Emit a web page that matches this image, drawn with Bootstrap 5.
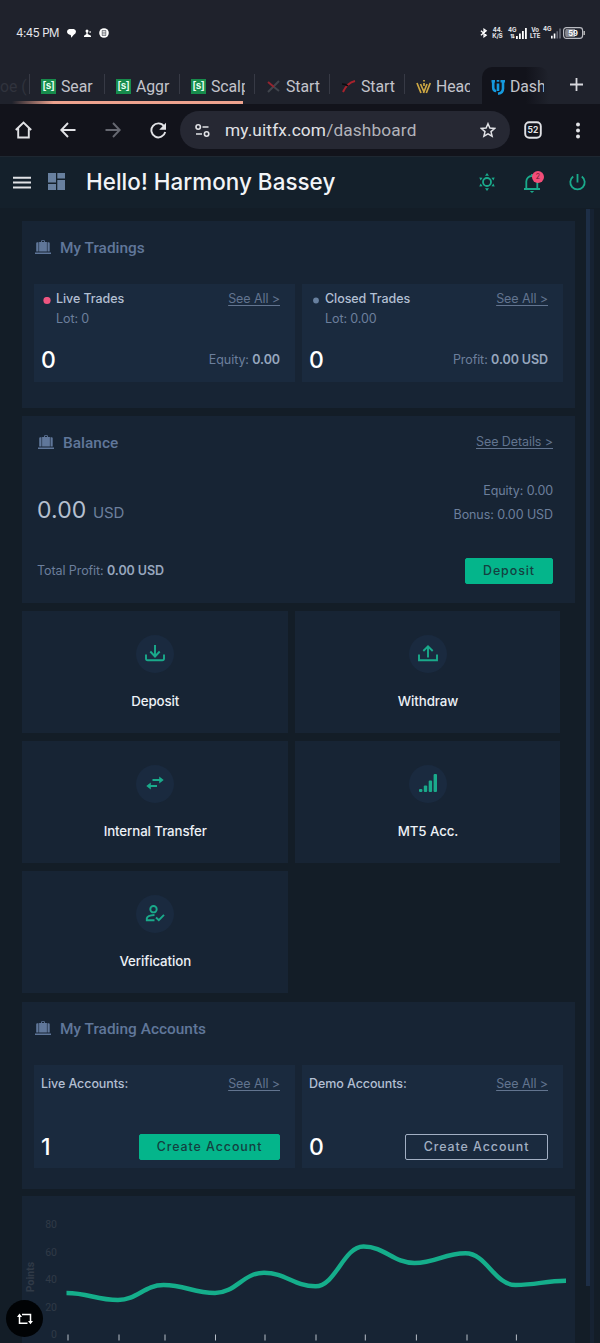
<!DOCTYPE html>
<html lang="en">
<head>
<meta charset="utf-8">
<meta name="viewport" content="width=device-width, initial-scale=1">
<title>Dashboard</title>
<link href="https://cdn.jsdelivr.net/npm/bootstrap@5.3.0/dist/css/bootstrap.min.css" rel="stylesheet">
<style>
body{margin:0;height:1343px;overflow:hidden;background:#131d27;color:#6c7f9c;font-family:Inter,"Liberation Sans",sans-serif;font-size:12.5px;line-height:16px;letter-spacing:-.08px;white-space:nowrap}
svg{display:block;flex:none}
.status-bar{height:70px;background:#1f222c;color:#e8e8ec;padding:0 15px 4px 16px;font-size:11.5px;letter-spacing:-.45px}
.tiny{font-size:6px;line-height:6px;font-weight:700;letter-spacing:-.1px;text-align:center}
.tab-strip{height:34px;background:#1f222c;color:#c3c4cb;font-family:Roboto,sans-serif;font-size:15.8px;letter-spacing:-.05px}
.tab-item{width:75px;height:34px;padding:0 7px 1px 12px;gap:5px}
.tab-item::before{content:"";position:absolute;left:0;top:4px;height:20px;width:1px;background:#373a45}
.tab-item .lbl{width:34px;overflow:hidden;line-height:24px}
.tab-on{background:linear-gradient(90deg,#12131b 65%,#1f222c);border-radius:10px 10px 0 0;height:37px;margin-top:-3px;margin-left:3px;padding-top:3px;width:67px;padding-left:9px;padding-right:0}
.tab-on::before{display:none}
.fav{width:15px;height:15px;background:#178c4c;color:#e9fff2;font:700 10px/14px "Liberation Sans",sans-serif;text-align:center;letter-spacing:-.3px}
.load-line{left:12px;top:101px;width:231px;height:3px;background:linear-gradient(90deg,#1f222c,#eda38f 18%)}
.tool-bar{height:53px;background:#12131b;color:#e1e2e6;border-bottom:1px solid #1e2731}
.url-pill{width:330px;height:38px;border-radius:19px;background:#262833;font:17.3px/38px Roboto,sans-serif;letter-spacing:.13px}
.app-head{height:51px;background:#14202b}
.app-head h1{font-size:22.4px;font-weight:500;line-height:30px;letter-spacing:.05px;color:#f2f4f7;margin-top:-2px}
.green{color:#1aaa8b}
.dot-badge{left:9px;top:-2px;width:12px;height:12px;border-radius:50%;background:#f34d78;color:#6b1930;font-size:7px;line-height:12px;text-align:center;letter-spacing:0}
.page-body{padding:13px 25px 0 22px}
.panel{background:#172434;width:553px;height:187px;margin-bottom:8px}
.panel h2{font-family:Roboto,sans-serif;font-size:15.4px;line-height:20px;font-weight:500;letter-spacing:.02px;color:#60779a;margin:2px 0 0}
.sub{background:#1a2a3e;width:261px;padding:0 15px 0 7px}
.sub a,.panel a{color:#62748f;text-decoration:underline;text-underline-offset:2px}
.ttl{color:#b2bfd2;font-weight:500}
.num{font-size:23px;line-height:28px;font-weight:500;color:#fff;letter-spacing:0}
.strong-v{color:#97a7be;font-weight:600}
.btn-go{--bs-btn-padding-y:0;--bs-btn-padding-x:0;--bs-btn-border-radius:2px;--bs-btn-bg:#04b58b;--bs-btn-color:#143f40;--bs-btn-border-color:#04b58b;font-size:12.4px;line-height:24px;height:26px;font-weight:500;letter-spacing:.95px;text-align:center}
.btn-line{--bs-btn-bg:transparent;--bs-btn-color:#a2afc3;--bs-btn-border-color:#a2afc3}
.tiles{width:538px;display:grid;grid-template-columns:265.5px 265px;gap:7.5px;margin-bottom:8.5px}
.tile{background:#172434;height:122.4px;color:#edf1f6;font-size:13.3px;font-weight:500;letter-spacing:-.1px;padding:24px 0 0 1px}
.disc{width:38px;height:38px;border-radius:50%;background:#1a2a3f;color:#1aaa8b;margin-bottom:20px;padding-bottom:1px}
.scroll-thumb{left:586px;top:209px;width:4px;height:1077px;background:#1d2e46}
.scroll-track{left:590px;top:209px;width:4px;height:1134px;background:#162232}
.float-btn{left:6px;top:1300px;width:37px;height:37px;border-radius:50%;background:#010305;color:#fff}
</style>
</head>
<body>
<svg width="0" height="0" class="position-absolute">
<symbol id="bag" viewBox="0 0 16 14"><path fill="currentColor" d="M4.1 2H6V1.2Q6 .2 7 .2h2q1 0 1 1V2h1.9v9.6H4.1zM6.9 2h2.2V1.1H6.9zM1.2 3.2q0-1 1-1h1.3v9.4H1.2zM12.5 2.2h1.2q1 0 1 1v8.4h-2.2zM0 12.5h16V14H0z"/></symbol>
</svg>
<div class="status-bar d-flex align-items-center">
 <span>4:45 PM</span>
 <svg style="margin-left:8px" width="9" height="9" viewBox="0 0 9 9" fill="#fff"><path d="M2.2 0h4.6Q9 .5 9 2.8 8.8 5 6.8 5.8L4.3 8.7 3.7 6Q0 5.2 0 2.8 0 .6 2.2 0z"/></svg>
 <svg class="ms-2" width="7" height="8" viewBox="0 0 7 8" fill="#fff"><circle cx="3" cy="2" r="1.5"/><path d="M2.4 3h1.3v2L7 6.7V8H0V6.7L2.4 5zM4.7 3l2-1v2z"/></svg>
 <svg class="ms-2" width="10" height="10" viewBox="0 0 10 10"><circle cx="5" cy="5" r="4.8" fill="#fff"/><path d="M3 2.5h4M3 4.2h4M3 5.9h4M3 7.5h4M3.2 2.5v5M6.8 2.5v5" stroke="#6b6e76" stroke-width=".8"/></svg>
 <svg class="ms-auto" width="8" height="10" viewBox="0 0 9 10" fill="none" stroke="#fff" stroke-width="1.4"><path d="m1 2.5 6 5L4.5 9.3V.7L7 2.5l-6 5"/></svg>
 <span class="tiny" style="width:11px;margin-left:4px">44.<br>K/S</span>
 <span class="tiny" style="width:8px;margin-left:5px">4G<br>⇅</span>
 <svg width="11" height="11" viewBox="0 0 11 11" fill="#fff"><path d="M0 8h1.8v3H0zM3 5.5h1.8V11H3zM6 3h1.8v8H6zM9 0h1.8v11H9z"/></svg>
 <span class="tiny" style="width:10px;margin-left:3px">Vo<br>LTE</span>
 <span class="tiny pb-2" style="width:8px;margin-left:3px">4G</span>
 <svg width="10" height="11" viewBox="0 0 11 11" fill="#fff"><path d="M0 8h1.8v3H0zM3 5.5h1.8V11H3z"/><path fill="#666974" d="M6 3h1.8v8H6zM9 0h1.8v11H9z"/></svg>
 <svg style="margin-left:2px" width="22" height="12" viewBox="0 0 22 12"><rect x=".6" y=".6" width="19" height="10.8" rx="2.8" fill="#1f222c" stroke="#b9bbc1" stroke-width="1.2"/><path d="M3 2h9v8H3q-1-1-1-4t1-4z" fill="#85878e"/><path d="M21.2 4v4" stroke="#ccc" stroke-width="1.3"/><text x="10" y="8.6" font-size="7.5" font-weight="700" fill="#fff" text-anchor="middle" letter-spacing="0">59</text></svg>
</div>
<div class="tab-strip d-flex position-relative">
 <div class="d-flex align-items-center" style="width:29px;color:#30333d">oe&nbsp;(</div>
 <div class="tab-item d-flex align-items-center position-relative"><span class="fav">[s]</span><span class="lbl">Sear</span></div>
 <div class="tab-item d-flex align-items-center position-relative"><span class="fav">[s]</span><span class="lbl">Aggr</span></div>
 <div class="tab-item d-flex align-items-center position-relative"><span class="fav">[s]</span><span class="lbl">Scalp</span></div>
 <div class="tab-item d-flex align-items-center position-relative"><svg width="15" height="15" viewBox="0 0 15 15" fill="none"><path d="M2 13 13 2M8 8l5 4" stroke="#41454d" stroke-width="2"/><path d="m2 3 6 5" stroke="#94242f" stroke-width="2"/></svg><span class="lbl">Start</span></div>
 <div class="tab-item d-flex align-items-center position-relative"><svg width="15" height="15" viewBox="0 0 15 15" fill="none"><path d="M2 13Q6 4 14 2" stroke="#a8222c" stroke-width="2"/><path d="M1 5q4 0 6 2" stroke="#0b0c10" stroke-width="1.5"/></svg><span class="lbl">Start</span></div>
 <div class="tab-item d-flex align-items-center position-relative"><svg width="15" height="15" viewBox="0 0 15 15" fill="none" stroke="#cda743" stroke-width="1.7"><path d="m1 4 4 10M4.5 5 8 13M8 1v1.6M8 4v3M11 5 7.5 14M14.3 4l-4 10"/></svg><span class="lbl">Head</span></div>
 <div class="tab-item tab-on d-flex align-items-center position-relative"><svg width="14" height="16" viewBox="0 0 14 16" fill="none" stroke="#1599dd" stroke-width="2.6"><path d="M2.2 1v7.5q0 3.5 3 3.5M.5 2.2h3.5M12 1v8.5q0 4.5-5 5.2M7 4.5v7.5M7 1v1.8M9.5 2.2H14"/></svg><span class="lbl">Dash</span></div>
 <svg class="ms-auto mt-2" style="margin-right:17px" width="13" height="13" viewBox="0 0 13 13" stroke="#d7d8dd" stroke-width="1.8"><path d="M6.5 0v13M0 6.5h13"/></svg>
</div>
<div class="load-line position-absolute"></div>
<div class="tool-bar d-flex align-items-center">
 <svg style="margin-left:15px" width="17" height="18" viewBox="0 0 17 18" fill="none" stroke="currentColor" stroke-width="1.9"><path d="M.8 9 8.5 1.5 16.2 9M3.2 7.2v9.3h10.6V7.2"/></svg>
 <svg style="margin-left:28px" width="16" height="16" viewBox="0 0 16 16" fill="none" stroke="currentColor" stroke-width="1.9"><path d="M15.5 8H1.5M8 1 1.3 8 8 15"/></svg>
 <svg style="margin-left:29px;color:#666871" width="16" height="16" viewBox="0 0 16 16" fill="none" stroke="currentColor" stroke-width="1.9"><path d="M.5 8h14M8 1l6.7 7L8 15"/></svg>
 <svg style="margin-left:29px" width="17" height="17" viewBox="0 0 17 17"><path d="M14 4.2A7 7 0 1 0 15.2 10" fill="none" stroke="currentColor" stroke-width="1.9"/><path d="M16 .8v7H9.2z" fill="currentColor"/></svg>
 <div class="url-pill d-flex align-items-center" style="margin-left:13px">
  <svg style="margin-left:15px" width="15" height="13" viewBox="0 0 15 13" fill="none" stroke="currentColor" stroke-width="1.6"><circle cx="3.2" cy="3" r="2.2"/><path d="M7.5 3h6M1 10h6"/><circle cx="11.6" cy="10" r="2.2"/></svg>
  <span style="margin-left:15px">my.uitfx.com<span style="color:#b2b3ba">/dashboard</span></span>
  <svg class="ms-auto" style="margin-right:14px" width="16" height="16" viewBox="0 0 16 16" fill="none" stroke="currentColor" stroke-width="1.5"><path d="m8 1.7 1.9 4.4 4.7.4-3.6 3.1 1.1 4.6L8 11.8l-4.1 2.4L5 9.6 1.4 6.5l4.7-.4z"/></svg>
 </div>
 <svg style="margin-left:14px" width="18" height="18" viewBox="0 0 18 18"><rect x="1.2" y="1.2" width="15.6" height="15.6" rx="4" fill="none" stroke="currentColor" stroke-width="1.9"/><text x="9" y="12.2" font-size="8.5" font-weight="700" letter-spacing="0" text-anchor="middle" fill="currentColor">52</text></svg>
 <svg style="margin-left:33px" width="6" height="17" viewBox="0 0 6 17" fill="currentColor"><circle cx="3" cy="2.5" r="2"/><circle cx="3" cy="8.5" r="2"/><circle cx="3" cy="14.5" r="2"/></svg>
</div>
<header class="app-head d-flex align-items-center">
 <svg style="margin-left:13px" width="18" height="13" viewBox="0 0 18 13" stroke="#e1e2e6" stroke-width="2"><path d="M0 1.8h18M0 6.6h18M0 11.4h18"/></svg>
 <svg style="margin:0 0 2px 17px" width="17" height="17" viewBox="0 0 17 17" fill="#68809f"><path d="M0 0h8v9.5H0zM9.3 0H17v5.5H9.3zM0 11h8v6H0zM9.3 7H17v10H9.3z"/></svg>
 <h1 class="mb-0" style="margin-left:21px">Hello! Harmony Bassey</h1>
 <svg class="ms-auto green" style="margin-bottom:1px" width="18" height="18" viewBox="0 0 18 18"><circle cx="9" cy="9" r="4" fill="none" stroke="currentColor" stroke-width="1.8"/><path fill="currentColor" d="m9 0 2 2.7H7zM9 18l2-2.7H7zM1.3 4.4l3.3.4-2 2.8zM16.7 4.4l-3.3.4 2 2.8zM1.3 13.6l3.3-.4-2-2.8zM16.7 13.6l-3.3-.4 2-2.8z"/></svg>
 <div class="position-relative green" style="margin-left:27px"><svg width="18" height="20" viewBox="0 0 18 20" fill="none" stroke="currentColor" stroke-width="1.8"><path d="M1 16h16M3.3 16V8.5a5.5 5.5 0 0 1 11 0V16M9 3V1"/><path d="M6.8 18h4.4L9 20z" fill="currentColor" stroke="none"/></svg><span class="dot-badge position-absolute">2</span></div>
 <svg class="green" style="margin:0 14px 0 28px" width="17" height="17" viewBox="0 0 17 17" fill="none" stroke="currentColor" stroke-width="1.8"><path d="M8.5 0v8.5M4.2 2.5a7.2 7.2 0 1 0 8.6 0"/></svg>
</header>
<main class="page-body">
 <section class="panel">
  <div class="d-flex align-items-center" style="height:63px;padding:0 0 11px 13px"><svg width="16" height="14" style="color:#60779a"><use href="#bag"/></svg><h2 style="margin-left:9px">My Tradings</h2></div>
  <div class="d-flex" style="gap:7px;margin-left:12px">
   <div class="sub" style="height:98px">
    <div class="d-flex align-items-center" style="padding:7px 0 0 2px"><svg width="8" height="8" class="mt-1"><circle cx="4" cy="3.5" r="3.6" fill="#ee5580"/></svg><span class="ttl" style="margin-left:5px">Live Trades</span><a class="ms-auto">See All &gt;</a></div>
    <div style="padding:4px 0 0 15px">Lot: 0</div>
    <div class="d-flex align-items-center" style="margin-top:19px"><span class="num">0</span><span class="ms-auto">Equity: <span class="strong-v">0.00</span></span></div>
   </div>
   <div class="sub" style="height:98px">
    <div class="d-flex align-items-center" style="padding:7px 0 0 2px"><svg width="8" height="8" class="mt-1"><circle cx="5" cy="3.5" r="2.9" fill="#68809f"/></svg><span class="ttl" style="margin-left:6px">Closed Trades</span><a class="ms-auto">See All &gt;</a></div>
    <div style="padding:4px 0 0 16px">Lot: 0.00</div>
    <div class="d-flex align-items-center" style="margin-top:19px"><span class="num">0</span><span class="ms-auto">Profit: <span class="strong-v">0.00 USD</span></span></div>
   </div>
  </div>
 </section>
 <section class="panel" style="padding:15px 22px 0 15px">
  <div class="d-flex align-items-center"><svg width="16" height="14" style="color:#60779a;margin-left:1px"><use href="#bag"/></svg><h2 style="margin-left:9px">Balance</h2><a class="ms-auto">See Details &gt;</a></div>
  <div class="d-flex" style="margin-top:31px"><div style="font-size:23px;line-height:28px;padding-top:12px;color:#b5c0d0;letter-spacing:.1px">0.00 <span style="font-size:15px;color:#6c7f9c;letter-spacing:-.1px">USD</span></div><div class="ms-auto text-end" style="line-height:24px;margin-top:-5px">Equity: 0.00<br>Bonus: 0.00 USD</div></div>
  <div class="d-flex align-items-center" style="margin-top:31px"><span>Total Profit: <span class="strong-v">0.00 USD</span></span><button class="btn btn-go ms-auto" style="width:88px">Deposit</button></div>
 </section>
 <div class="tiles">
  <div class="tile d-flex flex-column align-items-center"><span class="disc d-flex align-items-center justify-content-center"><svg width="20" height="20" viewBox="0 0 20 20" fill="none" stroke="currentColor" stroke-width="1.9"><path d="M10 1v11M5.3 7.5l4.7 5 4.7-5M1 10.5v4q0 1.8 1.8 1.8h14.4q1.8 0 1.8-1.8v-4"/></svg></span>Deposit</div>
  <div class="tile d-flex flex-column align-items-center"><span class="disc d-flex align-items-center justify-content-center"><svg width="20" height="20" viewBox="0 0 20 20" fill="none" stroke="currentColor" stroke-width="1.9"><path d="M10 13.5V2.5M5.3 7l4.7-4.7L14.7 7M1 10.5v5.8h18v-5.8"/></svg></span>Withdraw</div>
  <div class="tile d-flex flex-column align-items-center"><span class="disc d-flex align-items-center justify-content-center"><svg width="18" height="14" viewBox="0 0 18 14" fill="none" stroke="currentColor" stroke-width="1.9"><path d="M6.5 4H16M2 10h9"/><path fill="currentColor" stroke="none" d="m13.2.5 4.5 3.5-4.5 3.5zM4.8 6.5.3 10l4.5 3.5z"/></svg></span>Internal Transfer</div>
  <div class="tile d-flex flex-column align-items-center"><span class="disc d-flex align-items-center justify-content-center"><svg width="18" height="18" viewBox="0 0 18 18" fill="currentColor"><rect y="15" width="3.4" height="3" rx="1"/><rect x="4.8" y="11.5" width="3.4" height="6.5" rx="1"/><rect x="9.7" y="6.5" width="3.4" height="11.5" rx="1"/><rect x="14.6" y="0" width="3.4" height="18" rx="1"/></svg></span>MT5 Acc.</div>
  <div class="tile d-flex flex-column align-items-center"><span class="disc d-flex align-items-center justify-content-center"><svg width="20" height="17" viewBox="0 0 20 17" fill="none" stroke="currentColor" stroke-width="1.9"><circle cx="8.5" cy="4.2" r="3.2"/><path d="M9.5 15.2H1.8v-2q.6-2.8 7.7-3.2M11 12.5l2.8 2.7 5.2-5.4"/></svg></span>Verification</div>
 </div>
 <section class="panel" style="margin-bottom:7px">
  <div class="d-flex align-items-center" style="height:63px;padding:0 0 11px 13px"><svg width="16" height="14" style="color:#60779a"><use href="#bag"/></svg><h2 style="margin-left:9px">My Trading Accounts</h2></div>
  <div class="d-flex" style="gap:7px;margin-left:12px">
   <div class="sub" style="height:103px">
    <div class="d-flex" style="padding-top:11px"><span class="ttl">Live Accounts:</span><a class="ms-auto">See All &gt;</a></div>
    <div class="d-flex align-items-center" style="margin-top:41px"><span class="num">1</span><button class="btn btn-go ms-auto" style="width:141px">Create Account</button></div>
   </div>
   <div class="sub" style="height:103px">
    <div class="d-flex" style="padding-top:11px"><span class="ttl">Demo Accounts:</span><a class="ms-auto">See All &gt;</a></div>
    <div class="d-flex align-items-center" style="margin-top:41px"><span class="num">0</span><button class="btn btn-go btn-line ms-auto" style="width:143px">Create Account</button></div>
   </div>
  </div>
 </section>
 <section class="panel mb-0">
  <svg width="553" height="147" viewBox="22 1196 553 147" font-family="Roboto" font-size="10.5" letter-spacing="0">
   <g fill="#303a47" text-anchor="end"><text x="57" y="1228">80</text><text x="57" y="1255.5">60</text><text x="57" y="1283">40</text><text x="57" y="1310.5">20</text><text x="57" y="1338">0</text></g>
   <text transform="translate(34 1277) rotate(-90)" text-anchor="middle" font-weight="700" font-size="10.5" fill="#303a47">Points</text>
   <path id="line" fill="none" stroke="#15ae8b" stroke-width="4.4"/>
   <path stroke="#b8bfc8" stroke-width="1" d="M68 1334.5v6M119 1334.5v6M165 1334.5v6M215.5 1334.5v6M265 1334.5v6M316 1334.5v6M365.3 1334.5v6M416.4 1334.5v6M467 1334.5v6M516.4 1334.5v6"/>
  </svg>
 </section>
</main>
<div class="scroll-thumb position-absolute"></div><div class="scroll-track position-absolute"></div>
<div class="float-btn position-absolute d-flex align-items-center justify-content-center"><svg width="16" height="12" viewBox="0 0 16 12" fill="none" stroke="currentColor" stroke-width="1.5"><path d="M2.5 2v8.2h8M5 1.5h8.5V9"/><path fill="currentColor" stroke="none" d="M2.5.5 5 4H0zM13.5 11.3 16 8h-5z"/></svg></div>
<script src="https://cdn.jsdelivr.net/npm/bootstrap@5.3.0/dist/js/bootstrap.bundle.min.js"></script>
<script>
// Smooth line: flat tangents at every data point
const pts=[[66.5,1293],[118,1300],[163.5,1285],[215,1293],[264,1272.7],[315.5,1286.3],[363.5,1246.5],[414.5,1263],[465.5,1253.3],[515.5,1285],[566,1280.8]];
let d='M'+pts[0];
for(let i=1;i<pts.length;i++){const[a,b]=pts[i-1],[x,y]=pts[i],k=(x-a)*.42;d+=`C${a+k} ${b} ${x-k} ${y} ${x} ${y}`}
document.getElementById('line').setAttribute('d',d);
</script>
</body>
</html>
